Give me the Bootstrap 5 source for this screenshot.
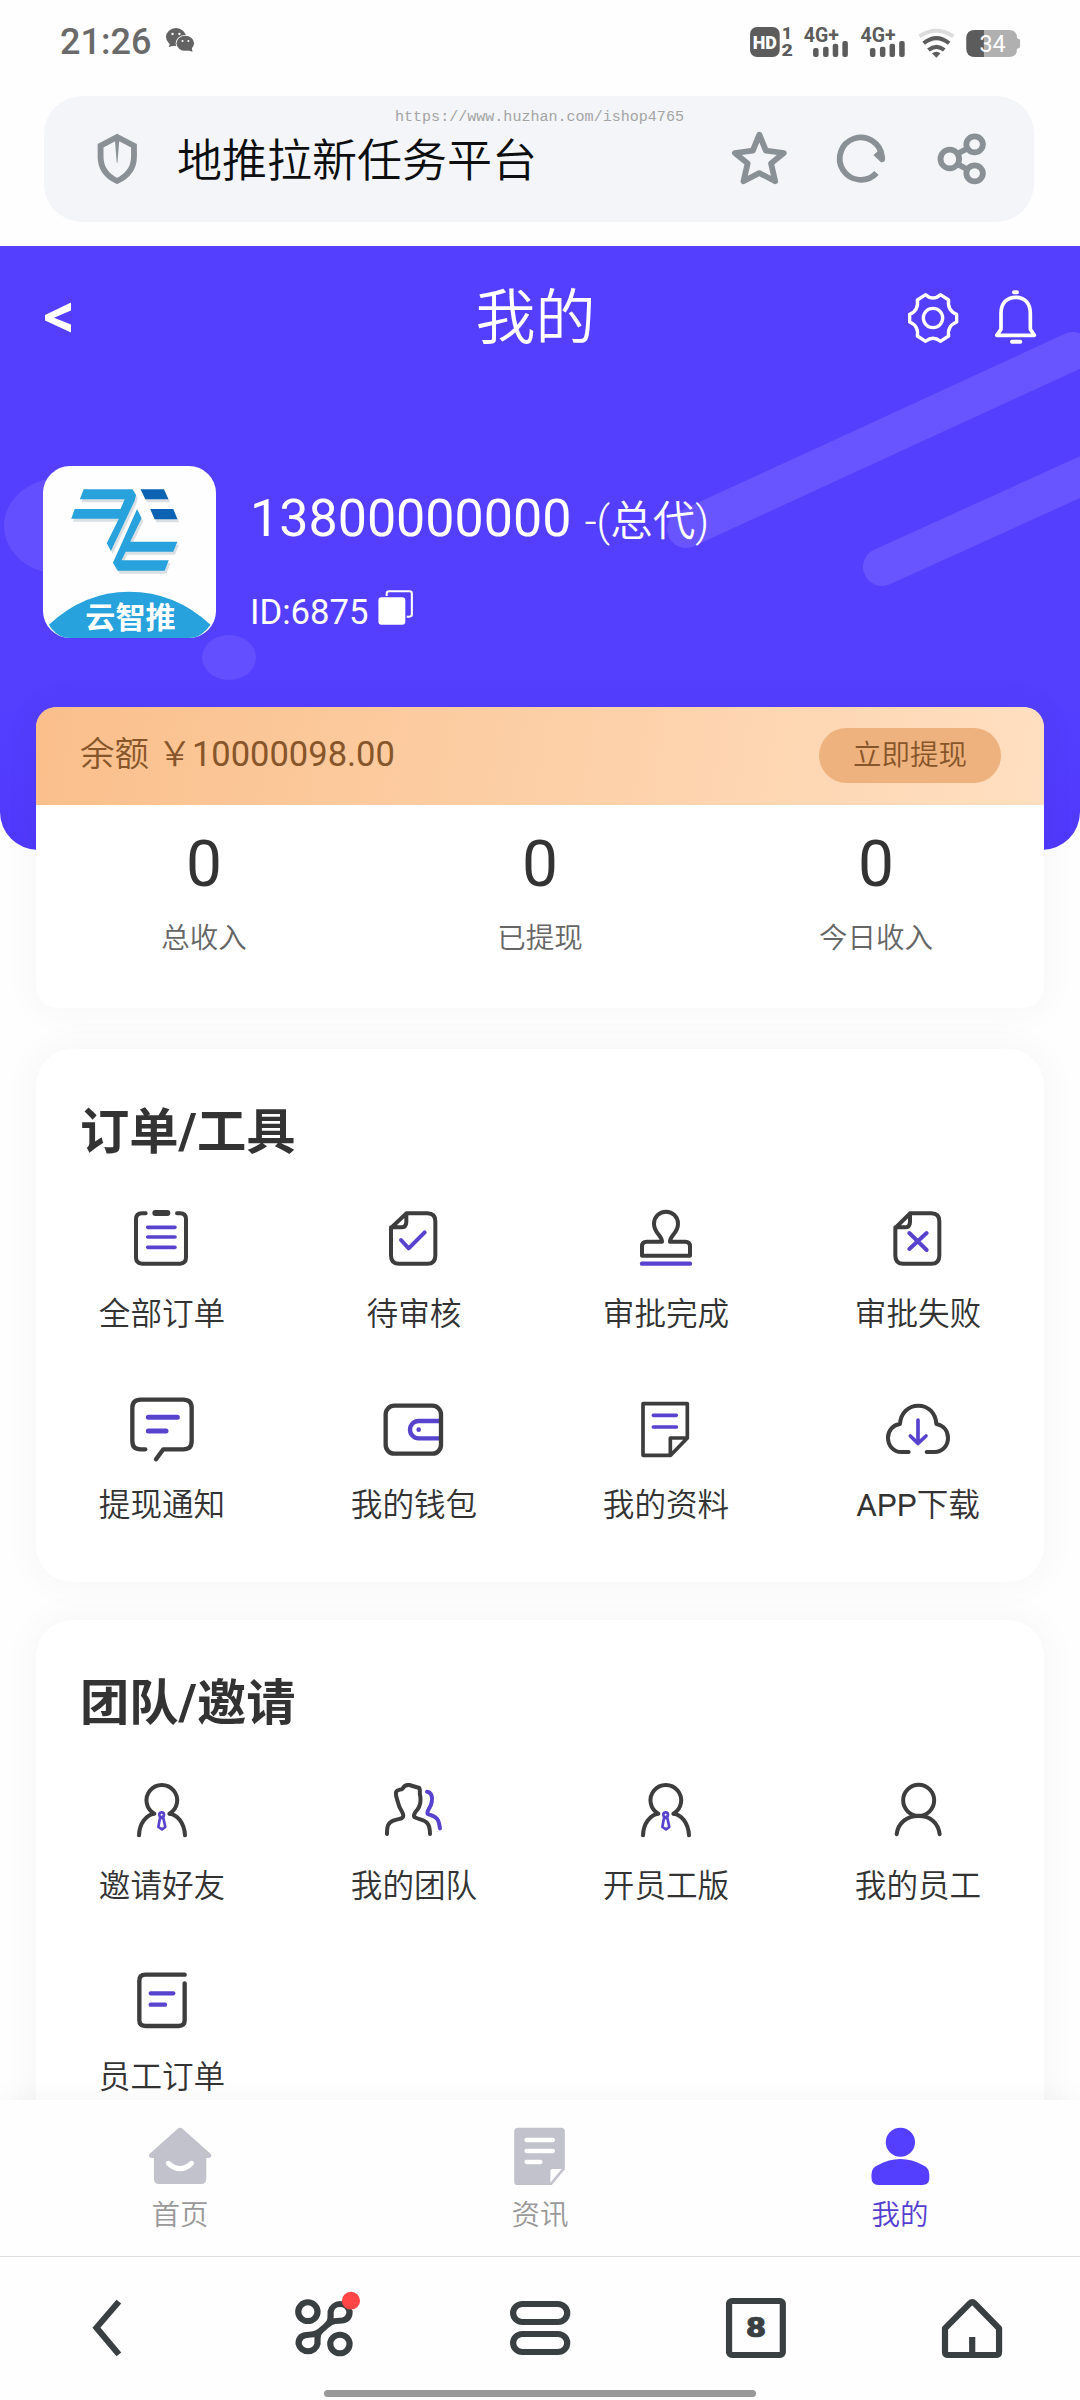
<!DOCTYPE html>
<html lang="zh-CN">
<head>
<meta charset="utf-8">
<meta name="viewport" content="width=device-width, initial-scale=1">
<title>地推拉新任务平台</title>
<link href="https://cdn.jsdelivr.net/npm/bootstrap@5.3.0/dist/css/bootstrap.min.css" rel="stylesheet">
<style>
  body { width: 1080px; height: 2400px; overflow: hidden; background: #fefefe; color: #333;
    font-family: Roboto, "Noto Sans CJK SC", sans-serif; }
  svg { display: block; flex: none; overflow: visible; }
  .ln { fill: none; stroke: #3d3d3d; stroke-width: 12; stroke-linecap: round; stroke-linejoin: round; }
  .pu { stroke: #5843cf; }
  .w10 { stroke-width: 11; } .w12 { stroke-width: 13; } .w14 { stroke-width: 15; }

  .status { height: 96px; padding: 22px 55px 0 60px; color: #666; }
  .clock { font-size: 36px; line-height: 40px; font-weight: 500; color: #6a6a6a; margin-right: 11px; }
  .addr { height: 126px; margin: 0 46px 24px 44px; padding: 0 40px 0 41px; border-radius: 38px; background: #f3f5f8; }
  .addr-title { font-size: 45px; line-height: 56px; color: #0c0e10; margin-left: 28px; padding-top: 5px; font-weight: 350; }
  .addr-tools { gap: 37px; }
  .gl { fill: none; stroke: #8a9196; stroke-width: 17; }
  .watermark { left: 395px; top: 107px; font: 15.05px/20px "Liberation Mono", monospace; color: #a4a4a4; white-space: nowrap; }

  .page { flex: 1 1 0; min-height: 0; overflow: hidden; }
  .hero { height: 604px; border-radius: 0 0 38px 38px; background: linear-gradient(#543fff 70%, #5039fc); color: #fff; overflow: hidden; }
  .decor { left: 0; top: 0; }
  .hero-nav { padding: 40px 32px 0 44px; }
  .hero-title { font-size: 60px; line-height: 66px; height: 64px; margin: 0 6px 0 -15px; font-weight: 350; }
  .hero-tools { gap: 19px; }
  .profile { padding: 116px 43px 0; gap: 34px; }
  .avatar { border-radius: 27px; overflow: hidden; }
  .phone { font-size: 52px; line-height: 64px; height: 64px; margin-top: 21px; white-space: nowrap; }
  .phone span { font-size: 42.500px; font-weight: 350; }
  .uid { font-size: 34.700px; line-height: 40px; height: 40px; margin-top: 41px; gap: 7px; }
  .uid svg { margin-top: -9px; }

  .panel { margin: 0 36px 41px; border-radius: 36px; background: #fff; box-shadow: 0 0 40px rgba(0,0,0,.045); }
  .balance { margin-top: -143px; margin-bottom: 41px; border-radius: 22px; overflow: visible; padding-bottom: 50px; }
  .strip { height: 98px; border-radius: 20px 20px 0 0; padding: 0 43px 1px 44px; color: #87552a; background: linear-gradient(100deg, #fabf8b, #ffdfc1); }
  .strip-sum { font-size: 34.500px; line-height: 40px; padding-bottom: 3px; }
  .demi { font-weight: 350; }
  .draw { width: 182px; height: 55px; border: 0; border-radius: 28px; background: #eeb27e; color: #87552a; font-size: 28.500px; line-height: 52px; font-weight: 350; }
  .num { font-size: 64px; line-height: 80px; margin-top: 20px; }
  .cap { font-size: 28.500px; line-height: 40px; margin-top: 14px; margin-bottom: -1px; color: #666; font-weight: 350; }

  .tools { padding: 53px 0 56px; margin-bottom: 38px; }
  .tools h2 { font-size: 49.300px; line-height: 60px; font-weight: 700; margin: 0 0 44px 44px; }
  .tools .row { row-gap: 62px; }
  .tools .col-3 { font-size: 31.600px; line-height: 40px; gap: 25px; white-space: nowrap; font-weight: 350; }
  .team h2 { margin-bottom: 45px; }

  .tabs { height: 156px; padding-top: 24px; background: #fefefe; box-shadow: 0 0 28px rgba(0,0,0,.05); z-index: 2; }
  .tab { gap: 10px; font-size: 28.500px; line-height: 36px; color: #999; font-weight: 350; }
  .tab.on { color: #553fd0; }
  .sysbar { height: 144px; border-top: 1px solid #dedede; padding-top: 35px; background: #fefefe; z-index: 3; }
  .dk { fill: none; stroke: #3a4042; stroke-width: 18; stroke-linejoin: round; }
  .pill { width: 432px; height: 7px; margin-top: 26px; background: #989898; }
</style>
<script src="https://cdn.jsdelivr.net/npm/bootstrap@5.3.0/dist/js/bootstrap.bundle.min.js"></script>
</head>
<body class="d-flex flex-column position-relative m-0">

<svg width="0" height="0" class="position-absolute">
  <symbol id="agent" viewBox="270 355 192 192">
    <path class="ln" d="M297 527C298 490 320 465 343 462A46 46 0 1 1 388 462C413 465 433 490 435 527"/>
    <circle class="ln pu" cx="365" cy="465" r="7" style="stroke-width:8"/>
    <path class="ln pu" d="M360 475L355 502L366 509L376 502L370 475Z" style="stroke-width:8"/>
  </symbol>
</svg>

<header class="status d-flex align-items-start">
  <span class="clock">21:26</span>
  <svg width="36" height="36" viewBox="470.4 72 104.5 108" preserveAspectRatio="none">
    <path fill="#636363" d="M490 147L495 133L510 142Z"/><ellipse cx="511" cy="117" rx="29" ry="27" fill="#636363"/>
    <ellipse cx="538" cy="136" rx="28" ry="25" fill="#fefefe"/><ellipse cx="538" cy="136" rx="25.500" ry="22.500" fill="#636363"/>
    <path fill="#636363" d="M559 161L556 146L542 156Z"/>
    <g fill="#fefefe"><circle cx="501" cy="108" r="3.500"/><circle cx="521" cy="108" r="3.500"/><circle cx="530" cy="129" r="3"/><circle cx="547" cy="129" r="3"/></g>
  </svg>
  <svg class="ms-auto" width="280" height="40" viewBox="595.3 66 813 120" preserveAspectRatio="none" font-family="Roboto" font-weight="700" fill="#5c5c5c">
    <rect x="610" y="81" width="86" height="90" rx="20"/>
    <text x="618" y="147" font-size="57" textLength="70" lengthAdjust="spacingAndGlyphs" font-weight="900" fill="#fff">HD</text>
    <text x="703" y="116" font-size="50" font-weight="900">1</text><text x="701" y="168" font-size="47" font-weight="900" textLength="33" lengthAdjust="spacingAndGlyphs">2</text>
    <text x="766" y="125" font-size="58" textLength="102" lengthAdjust="spacingAndGlyphs">4G+</text>
    <rect x="793" y="144" width="16" height="27" rx="6"/><rect x="822" y="140" width="16" height="31" rx="6"/><rect x="850" y="131" width="16" height="40" rx="6"/><rect x="878" y="123" width="16" height="48" rx="6"/>
    <text x="931" y="125" font-size="58" textLength="102" lengthAdjust="spacingAndGlyphs">4G+</text>
    <rect x="958" y="144" width="16" height="27" rx="6"/><rect x="987" y="140" width="16" height="31" rx="6"/><rect x="1015" y="131" width="16" height="40" rx="6"/><rect x="1043" y="123" width="16" height="48" rx="6"/>
    <g fill="none" stroke="#5c5c5c" stroke-width="12">
      <path stroke="#dcdcdc" d="M1102 109Q1151 76 1200 109"/><path d="M1114 130Q1151 99 1188 130"/><path d="M1128 150Q1151 131 1174 150"/>
    </g>
    <path d="M1138 160Q1151 150 1163 160L1151 173Z"/>
    <path fill="#b0b0b0" d="M1264 90H1362Q1385 90 1385 114L1394 119V142L1385 147Q1385 171 1362 171H1264Q1238 171 1238 146V115Q1238 90 1264 90Z"/>
    <path d="M1289 90H1264Q1238 90 1238 115V146Q1238 171 1264 171H1289Z"/>
    <text x="1276" y="156" font-size="71" font-weight="400" textLength="76" lengthAdjust="spacingAndGlyphs" fill="#fff">34</text>
  </svg>
</header>

<div class="addr d-flex align-items-center">
  <svg width="64" height="64" viewBox="246.800 381 185.800 192" preserveAspectRatio="none">
    <path class="gl" d="M340 411L389 437V470C389 505 370 528 340 543C310 528 292 505 292 470V437Z"/><path fill="#8a9196" d="M333 412H347L341 488H339Z"/>
  </svg>
  <span class="addr-title">地推拉新任务平台</span>
  <div class="addr-tools d-flex ms-auto">
    <svg width="64" height="64" viewBox="545 381 185.800 192" preserveAspectRatio="none"><path class="gl" stroke-linejoin="round" d="M636 404L655 452L707 459L670 490L682 544L636 519L590 544L602 490L565 459L617 452Z"/></svg>
    <svg width="64" height="64" viewBox="839.200 381 185.800 192" preserveAspectRatio="none"><path class="gl" d="M977 519A61.500 63.500 0 1 1 993 470"/><path fill="#8a9196" d="M968 465L986 449L1002 470V480Q1000 488 990 487Z"/></svg>
    <svg width="64" height="64" viewBox="1132.500 381 185.800 192" preserveAspectRatio="none"><g class="gl" style="stroke-width:17"><ellipse cx="1190" cy="477" rx="27" ry="28"/><circle cx="1262" cy="433" r="24"/><circle cx="1262" cy="520" r="24"/><path d="M1212 461L1240 446M1212 492L1240 508"/></g></svg>
  </div>
</div>
<div class="watermark position-absolute">https://www.huzhan.com/ishop4765</div>

<main class="page">
  <section class="hero position-relative">
    <svg class="decor position-absolute" width="1080" height="604" viewBox="0 246 1080 604" fill="none" stroke="#6955ff" stroke-width="38" stroke-linecap="round">
      <path d="M686 529L1073 351M882 567L1120 459"/>
      <g stroke="none" fill="#634fff"><ellipse cx="60" cy="526" rx="56" ry="48"/><ellipse cx="229" cy="657.500" rx="27" ry="22.500"/></g>
    </svg>
    <div class="hero-nav d-flex align-items-center position-relative">
      <div class="col"><svg width="28" height="36" viewBox="44 300 28 36"><path fill="#fff" d="M45 315L71 302.500V310.500L54 317.700L71 324.500V332.500L45 320.500Z"/></svg></div>
      <div class="hero-title">我的</div>
      <div class="hero-tools col d-flex justify-content-end">
        <svg width="64" height="64" viewBox="123 78 192 192" fill="none" stroke="#fff" stroke-width="10" stroke-linejoin="round"><path d="M197 104Q219 124 241 104L266 120Q261 151 290 163V186Q261 198 266 228L241 244Q219 226 197 244L172 228Q177 198 149 186V163Q177 151 172 120Z"/><circle cx="219" cy="174" r="29"/></svg>
        <svg width="64" height="64" viewBox="372 78 192 192" fill="none" stroke="#fff" stroke-width="11" stroke-linejoin="round" stroke-linecap="round"><path d="M410 226L423 208V160C423 130 440 112 467 112C494 112 511 130 511 160V208L523 226Z"/><path stroke-width="12" d="M462 97H471M456 245H481"/></svg>
      </div>
    </div>
    <div class="profile d-flex position-relative">
      <svg class="avatar" width="173" height="172" viewBox="125 78 502 516" preserveAspectRatio="none">
        <rect x="125" y="78" width="502" height="516" fill="#fefefe"/>
        <g fill="#d9dfe3" transform="translate(5 9)"><path d="M243 148H385L395 165L391 182L322 333L310 310L345 236H207L217 207H350L362 178H232Z"/><path d="M398 207L411 235L378 305H515L503 335H365L353 361H490L478 392H342L328 368Z"/><path d="M408 148H476L489 178H422ZM436 207H503L515 238H449Z"/></g>
        <g fill="#28a2dc"><path d="M243 148H385L395 165L391 182L322 333L310 310L345 236H207L217 207H350L362 178H232Z"/><path d="M398 207L411 235L378 305H515L503 335H365L353 361H490L478 392H342L328 368Z"/></g>
        <path fill="#0c63b4" d="M408 148H476L489 178H422ZM436 207H503L515 238H449Z"/>
        <path fill="#28a2dc" d="M142 554Q245 455 375 455Q508 455 611 554Q590 585 562 594H190Q160 585 142 554Z"/>
        <text x="248" y="563" font-family="'Noto Sans CJK SC'" font-weight="700" font-size="88" textLength="262" lengthAdjust="spacingAndGlyphs" fill="#fff">云智推</text>
      </svg>
      <div>
        <div class="phone">13800000000 <span>-(总代)</span></div>
        <div class="uid d-flex align-items-center">ID:6875
          <svg width="40" height="40" viewBox="1089 444 116 120" preserveAspectRatio="none"><rect x="1096" y="472" width="78" height="82" rx="9" fill="#fff"/><path fill="none" stroke="#fff" stroke-width="6" d="M1120 468V461Q1120 454 1127 454H1186Q1193 454 1193 461V523Q1193 530 1186 530H1178"/></svg>
        </div>
      </div>
    </div>
  </section>

  <section class="panel balance position-relative">
    <div class="strip d-flex align-items-center justify-content-between">
      <span class="strip-sum"><span class="demi">余额 ￥</span>10000098.00</span>
      <button class="draw p-0">立即提现</button>
    </div>
    <div class="row g-0 text-center">
      <div class="col"><div class="num">0</div><div class="cap">总收入</div></div>
      <div class="col"><div class="num">0</div><div class="cap">已提现</div></div>
      <div class="col"><div class="num">0</div><div class="cap">今日收入</div></div>
    </div>
  </section>

  <section class="panel tools">
    <h2>订单/工具</h2>
    <div class="row gx-0">
      <div class="col-3 d-flex flex-column align-items-center">
        <svg width="64" height="64" viewBox="270 378 192 192"><path class="ln" d="M317 400H306Q288 400 288 418V532Q288 551 306 551H420Q438 551 438 532V418Q438 400 420 400H411"/><path class="ln" style="stroke-width:18" d="M346 399H382"/><path class="ln pu w10" d="M323 442H405M323 471H405M323 502H405"/></svg>
        全部订单</div>
      <div class="col-3 d-flex flex-column align-items-center">
        <svg width="64" height="64" viewBox="1026 378 192 192"><path class="ln" d="M1099 400H1162Q1186 400 1186 424V527Q1186 551 1162 551H1078Q1053 551 1053 527V444ZV425Q1099 442 1083 442H1053"/><path class="ln pu" d="M1083 480L1106 505L1154 457"/></svg>
        待审核</div>
      <div class="col-3 d-flex flex-column align-items-center">
        <svg width="64" height="64" viewBox="282 78 192 192"><path class="ln" d="M366 185C366 165 342 160 342 131A36 36 0 0 1 414 131C414 160 390 165 390 185H436Q450 185 450 199V227H306V199Q306 185 320 185Z"/><path class="ln pu w12" d="M306 251H450"/></svg>
        审批完成</div>
      <div class="col-3 d-flex flex-column align-items-center">
        <svg width="64" height="64" viewBox="1038 78 192 192"><path class="ln" d="M1110 100H1174Q1198 100 1198 124V227Q1198 251 1174 251H1090Q1066 251 1066 227V144ZV125Q1110 142 1094 142H1066"/><path class="ln pu" d="M1108 159L1160 210M1160 159L1108 207"/></svg>
        审批失败</div>
      <div class="col-3 d-flex flex-column align-items-center">
        <svg width="64" height="64" viewBox="270 952 192 192"><path class="ln" style="stroke-width:13" d="M316 1109H302Q277 1109 277 1084V985Q277 960 302 960H430Q455 960 455 985V1084Q455 1109 430 1109H370L348 1139"/><path class="ln pu w14" d="M325 1013H412M325 1054H378"/></svg>
        提现通知</div>
      <div class="col-3 d-flex flex-column align-items-center">
        <svg width="64" height="64" viewBox="1026 952 192 192"><path class="ln pu w12" stroke-linecap="butt" d="M1198 1024H1136A26 26 0 0 0 1136 1076H1198"/><circle cx="1136" cy="1050" r="7" fill="#5843cf"/><rect class="ln w12" x="1037" y="978" width="166" height="144" rx="26"/></svg>
        我的钱包</div>
      <div class="col-3 d-flex flex-column align-items-center">
        <svg width="64" height="64" viewBox="282 652 192 192"><path class="ln w10" d="M309 672H442V775L392 827H309ZM442 775H391V827"/><path class="ln pu w10" d="M340 707H409M340 742H409"/></svg>
        我的资料</div>
      <div class="col-3 d-flex flex-column align-items-center">
        <svg width="64" height="64" viewBox="1038 652 192 192"><path class="ln" d="M1106 817H1084C1060 817 1044 797 1044 774C1044 752 1060 735 1080 733C1082 700 1105 678 1135 678C1165 678 1187 700 1189 733C1210 737 1224 753 1224 775C1224 798 1207 817 1184 817H1160"/><path class="ln pu w10" d="M1134 721V790M1111 769L1134 791L1158 769"/></svg>
        <div><span class="fw-normal">APP</span>下载</div></div>
    </div>
  </section>

  <section class="panel tools team">
    <h2>团队/邀请</h2>
    <div class="row gx-0">
      <div class="col-3 d-flex flex-column align-items-center"><svg width="64" height="64"><use href="#agent"/></svg>邀请好友</div>
      <div class="col-3 d-flex flex-column align-items-center">
        <svg width="64" height="64" viewBox="1026 355 192 192"><path class="ln" d="M1041 523C1041 500 1043 490 1060 483C1078 476 1090 478 1090 468C1090 458 1080 450 1076 435C1072 420 1066 408 1068 398C1070 390 1080 391 1087 388C1092 377 1100 375 1108 376L1138 385C1142 395 1137 400 1141 410C1143 425 1140 440 1132 450C1122 460 1120 470 1124 473C1140 481 1155 480 1163 492C1170 502 1170 510 1170 523"/><path class="ln pu" d="M1161 396C1175 398 1178 412 1175 428C1172 445 1158 455 1163 463C1175 468 1188 470 1194 482C1199 492 1198 500 1200 506"/></svg>
        我的团队</div>
      <div class="col-3 d-flex flex-column align-items-center"><svg width="64" height="64"><use href="#agent"/></svg>开员工版</div>
      <div class="col-3 d-flex flex-column align-items-center">
        <svg width="64" height="64" viewBox="1038 115 192 192"><circle class="ln" cx="1136" cy="182" r="46.500"/><path class="ln" d="M1070 284C1074 250 1100 229 1136 229C1172 229 1195 250 1199 284"/></svg>
        我的员工</div>
      <div class="col-3 d-flex flex-column align-items-center">
        <svg width="64" height="64" viewBox="270 928 192 192"><path class="ln w12" d="M434 945H316Q298 945 298 963V1082Q298 1099 316 1099H416Q434 1099 434 1082V971"/><path class="ln pu w12" d="M332 1001H400M332 1035H375"/></svg>
        员工订单</div>
    </div>
  </section>
</main>

<nav class="tabs d-flex position-relative">
  <div class="tab col d-flex flex-column align-items-center">
    <svg width="64" height="64" viewBox="429.800 102 185.800 192" preserveAspectRatio="none"><path fill="#c1c2cb" d="M516 116Q523 111 530 116L612 192Q617 203 606 204H599V266Q599 282 583 282H463Q447 282 447 266V204H440Q429 203 434 192Z"/><path fill="none" stroke="#fff" stroke-width="15" stroke-linecap="round" d="M489 220Q523 252 556 220"/></svg>
    首页</div>
  <div class="tab col d-flex flex-column align-items-center">
    <svg width="64" height="64" viewBox="1475 102 185.800 192" preserveAspectRatio="none"><path fill="#c1c2cb" d="M1505 113H1630Q1640 113 1640 124V238L1602 285H1503Q1493 285 1493 275V124Q1493 113 1505 113Z"/><path fill="none" stroke="#fff" stroke-width="13" stroke-linecap="round" d="M1529 150H1605M1529 183H1605M1529 216H1569"/><path fill="#fff" d="M1598 243Q1598 237 1604 237H1631L1598 278Z"/></svg>
    资讯</div>
  <div class="tab on col d-flex flex-column align-items-center">
    <svg width="64" height="64" viewBox="952 102 185.800 192" preserveAspectRatio="none" fill="#543eff"><ellipse cx="1046" cy="157" rx="42.500" ry="43.500"/><path d="M962 262V254Q962 234 980 226Q1046 188 1112 226Q1130 234 1130 254V268Q1128 285 1110 285H982Q962 285 962 262Z"/></svg>
    我的</div>
</nav>

<footer class="sysbar position-relative">
  <div class="d-flex">
    <div class="col d-flex justify-content-center"><svg width="72" height="72" viewBox="209 606 209 216" preserveAspectRatio="none"><path class="dk" style="stroke-linejoin:miter" d="M345 635L280 713L345 793"/></svg></div>
    <div class="col d-flex justify-content-center"><svg width="72" height="72" viewBox="836.300 606 209 216" preserveAspectRatio="none"><g class="dk"><circle cx="894" cy="665" r="28"/><circle cx="987" cy="762" r="28"/><path d="M941 713C962 695 960 690 960 665A28 28 0 0 1 1015 665C1015 685 1003 692 985 692C962 692 955 700 941 713C920 731 922 736 922 761A28 28 0 0 1 867 761C867 741 879 734 897 734C920 734 927 726 941 713Z"/></g><circle cx="1019" cy="632" r="26.500" fill="#ff4545"/></svg></div>
    <div class="col d-flex justify-content-center"><svg width="72" height="72" viewBox="1463.500 606 209 216" preserveAspectRatio="none"><g class="dk"><rect x="1490" y="642" width="157" height="54" rx="27"/><rect x="1490" y="732" width="157" height="54" rx="27"/></g></svg></div>
    <div class="col d-flex justify-content-center"><svg width="72" height="72" viewBox="522.700 606 209 216" preserveAspectRatio="none"><rect class="dk" x="549" y="633" width="156" height="162" rx="8"/><text x="598" y="742" font-family="Roboto" font-weight="900" font-size="82" textLength="58" lengthAdjust="spacingAndGlyphs" fill="#3a4042" stroke="#3a4042" stroke-width="2">8</text></svg></div>
    <div class="col d-flex justify-content-center"><svg width="72" height="72" viewBox="1149.900 606 209 216" preserveAspectRatio="none"><path class="dk" d="M1176 715L1248 640Q1255 633 1262 640L1333 715V785Q1333 795 1323 795H1186Q1176 795 1176 785ZM1255 741V795"/></svg></div>
  </div>
  <div class="pill rounded-pill mx-auto"></div>
</footer>
</body>
</html>
